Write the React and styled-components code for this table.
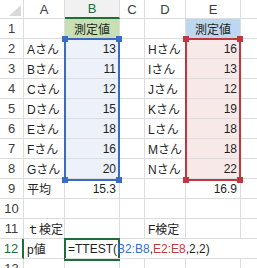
import React from 'react';
import styled, { createGlobalStyle, css } from 'styled-components';

const GlobalStyle = createGlobalStyle`
  html, body {
    margin: 0;
    padding: 0;
    background: #ffffff;
    overflow: hidden;
  }
  body {
    font-family: "Liberation Sans", "Noto Sans CJK JP", sans-serif;
  }
`;

const GRID_LINE = '#dcdcdc';
const GREEN = '#1e6d3d';
const BLUE = '#3a6cc6';
const RED = '#c23642';

const Sheet = styled.div`
  display: grid;
  grid-template-columns: 24px 41px 55px 25px 41px 55px 60px;
  grid-template-rows: 19px repeat(13, 20px);
  width: 257px;
  height: 268px;
  overflow: hidden;
  font-size: 12px;
  color: #1f1f1f;
`;

const Corner = styled.div`
  grid-row: 1;
  grid-column: 1;
  border-right: 1px solid ${GRID_LINE};
  border-bottom: 1px solid ${GRID_LINE};
  display: flex;
  align-items: flex-end;
  justify-content: flex-end;
  padding: 0 2px 2px 0;
  box-sizing: border-box;
`;

const ColHead = styled.div`
  grid-row: 1;
  grid-column: ${(p) => p.$col};
  box-sizing: border-box;
  display: flex;
  align-items: center;
  justify-content: center;
  font-size: 13px;
  color: #3c3c3c;
  border-right: 1px solid ${GRID_LINE};
  border-bottom: 1px solid ${GRID_LINE};
  ${(p) =>
    p.$active &&
    css`
      color: ${GREEN};
      background: #f1f1f1;
      border-bottom: 2px solid ${GREEN};
    `}
`;

const RowHead = styled.div`
  grid-row: ${(p) => p.$row};
  grid-column: 1;
  box-sizing: border-box;
  display: flex;
  align-items: center;
  justify-content: center;
  font-size: 13px;
  color: #3c3c3c;
  border-right: 1px solid ${GRID_LINE};
  border-bottom: 1px solid ${GRID_LINE};
  ${(p) =>
    p.$active &&
    css`
      color: ${GREEN};
      border-right: 2px solid ${GREEN};
    `}
`;

const Cell = styled.div`
  grid-row: ${(p) => p.$row};
  grid-column: ${(p) => p.$col};
  box-sizing: border-box;
  display: flex;
  align-items: center;
  justify-content: ${(p) =>
    p.$align === 'right' ? 'flex-end' : p.$align === 'center' ? 'center' : 'flex-start'};
  padding: 0 3px;
  white-space: nowrap;
  border-right: ${(p) => (p.$noRight ? '0' : `1px solid ${GRID_LINE}`)};
  border-bottom: 1px solid ${GRID_LINE};
  background: ${(p) => p.$fill || 'transparent'};
  ${(p) =>
    p.$spill &&
    css`
      overflow: visible;
      position: relative;
      z-index: 3;
    `}
`;

const FormulaText = styled.span`
  flex: none;
  white-space: nowrap;
`;

const RangeBox = styled.div`
  grid-row: ${(p) => p.$rows};
  grid-column: ${(p) => p.$col};
  margin: -1px 0 -2px -1px;
  border: 2px solid ${(p) => p.$color};
  position: relative;
  z-index: 2;
  pointer-events: none;
`;

const Handle = styled.span`
  position: absolute;
  width: 6px;
  height: 6px;
  background: ${(p) => p.$color};
  ${(p) => (p.$top ? 'top: -4px;' : 'bottom: -4px;')}
  ${(p) => (p.$left ? 'left: -4px;' : 'right: -4px;')}
`;

const ActiveBox = styled.div`
  grid-row: 13;
  grid-column: 3;
  margin: -1px 0 -2px -1px;
  border: 2px solid ${GREEN};
  z-index: 2;
  pointer-events: none;
`;

const Ref = styled.span`
  color: ${(p) => p.$color};
`;

const COLS = ['A', 'B', 'C', 'D', 'E', 'F'];

const rows = [
  ['', '測定値', '', '', '測定値', ''],
  ['Aさん', '13', '', 'Hさん', '16', ''],
  ['Bさん', '11', '', 'Iさん', '13', ''],
  ['Cさん', '12', '', 'Jさん', '12', ''],
  ['Dさん', '15', '', 'Kさん', '19', ''],
  ['Eさん', '18', '', 'Lさん', '18', ''],
  ['Fさん', '16', '', 'Mさん', '18', ''],
  ['Gさん', '20', '', 'Nさん', '22', ''],
  ['平均', '15.3', '', '', '16.9', ''],
  ['', '', '', '', '', ''],
  ['ｔ検定', '', '', 'F検定', '', ''],
  ['p値', null, '', '', '', ''],
  ['', '', '', '', '', ''],
];

const fillFor = (r, c) => {
  if (r === 1 && c === 1) return '#c6e0b4';
  if (r === 1 && c === 4) return '#bdd7ee';
  if (r >= 2 && r <= 8 && c === 1) return '#edf1fa';
  if (r >= 2 && r <= 8 && c === 4) return '#f8e9e9';
  return undefined;
};

const alignFor = (r, c) => {
  if (r === 1) return 'center';
  if (r === 12) return 'left';
  if (c === 1 || c === 4) return 'right';
  return 'left';
};

const Formula = () => (
  <FormulaText>
    =TTEST(<Ref $color={BLUE}>B2:B8</Ref>,<Ref $color={RED}>E2:E8</Ref>,2,2)
  </FormulaText>
);

const CornerMark = () => (
  <svg width="12" height="11" viewBox="0 0 12 11">
    <polygon points="12,0 12,11 0,11" fill="#d9d9d9" />
  </svg>
);

const Range = ({ col, color }) => (
  <RangeBox $rows="3 / 10" $col={col} $color={color}>
    <Handle $color={color} $top $left />
    <Handle $color={color} $top />
    <Handle $color={color} $left />
    <Handle $color={color} />
  </RangeBox>
);

export default function App() {
  return (
    <>
      <GlobalStyle />
      <Sheet>
        <Corner>
          <CornerMark />
        </Corner>
        {COLS.map((c, i) => (
          <ColHead key={c} $col={i + 2} $active={c === 'B'}>
            {c}
          </ColHead>
        ))}
        {rows.map((row, ri) => {
          const r = ri + 1;
          return (
            <React.Fragment key={r}>
              <RowHead $row={r + 1} $active={r === 12}>
                {r}
              </RowHead>
              {row.map((v, ci) => (
                <Cell
                  key={ci}
                  $row={r + 1}
                  $col={ci + 2}
                  $align={alignFor(r, ci)}
                  $fill={fillFor(r, ci)}
                  $noRight={r === 12 && ci >= 1}
                  $spill={v === null}
                >
                  {v === null ? <Formula /> : v}
                </Cell>
              ))}
            </React.Fragment>
          );
        })}
        <Range col={3} color={BLUE} />
        <Range col={6} color={RED} />
        <ActiveBox />
      </Sheet>
    </>
  );
}
